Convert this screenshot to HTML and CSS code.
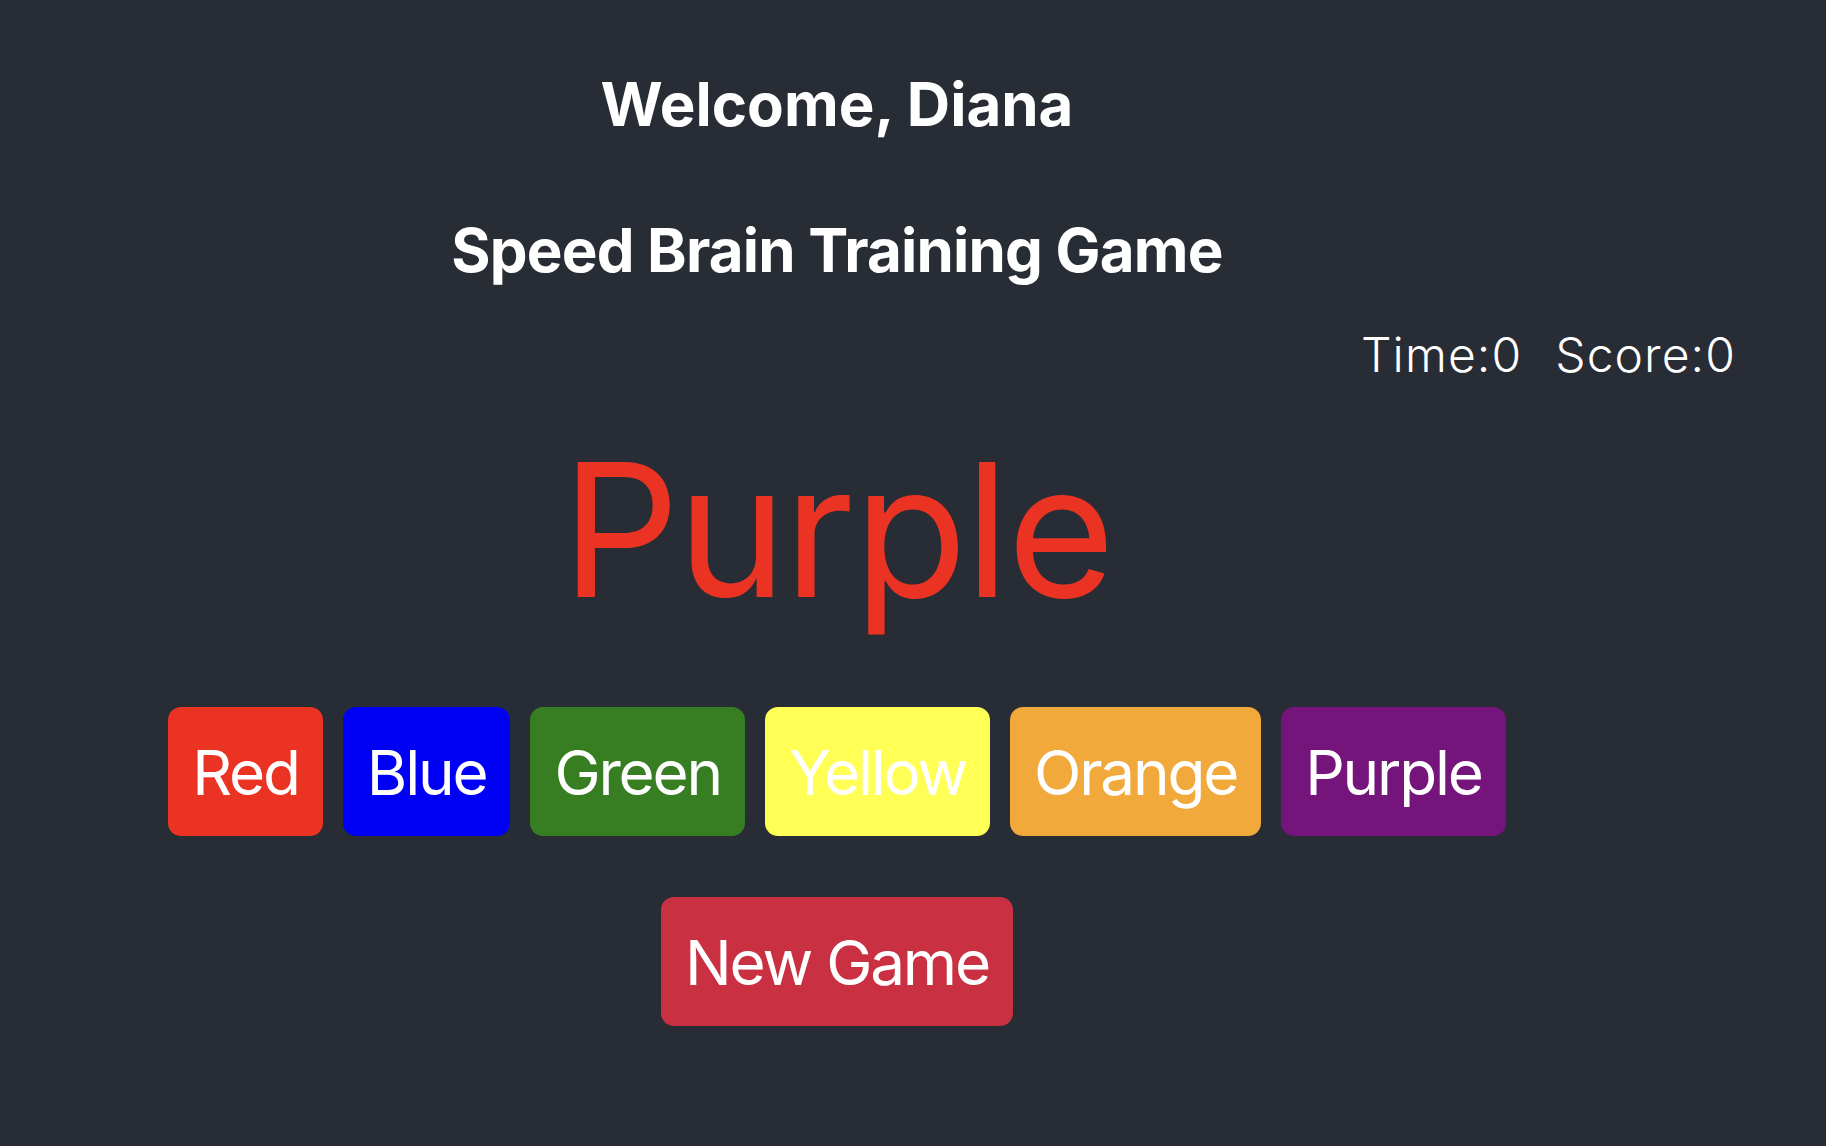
FILE: index.html
```html
<!DOCTYPE html>
<html lang="en">
<head>
<meta charset="utf-8">
<title>Speed Brain Training Game</title>
<link rel="stylesheet" href="styles.css">
</head>
<body>
<div class="app">
  <div class="main">
    <h1 class="title welcome">Welcome, Diana</h1>
    <h1 class="title game">Speed Brain Training Game</h1>
  </div>
  <div class="stats">
    <span class="stat">Time:0</span>
    <span class="stat">Score:0</span>
  </div>
  <div class="main">
    <div class="word">Purple</div>
    <div class="choices">
      <button class="btn red">Red</button>
      <button class="btn blue">Blue</button>
      <button class="btn green">Green</button>
      <button class="btn yellow">Yellow</button>
      <button class="btn orange">Orange</button>
      <button class="btn purple">Purple</button>
    </div>
    <button class="btn newgame">New Game</button>
  </div>
</div>
</body>
</html>
```
FILE: styles.css
```css
html, body {
  margin: 0;
  padding: 0;
  background: #282c34;
  height: 100%;
}
body {
  font-family: Inter, "Noto Sans", "Liberation Sans", sans-serif;
  color: #ffffff;
}
.app {
  display: flex;
  flex-direction: column;
  padding-top: 64px;
}
.main {
  width: 1674px;
  display: flex;
  flex-direction: column;
  align-items: center;
}
.title {
  margin: 0;
  font-size: 60px;
  line-height: 80px;
  font-weight: 700;
}
.game {
  margin-top: 66px;
  letter-spacing: -0.8px;
}
.stats {
  display: flex;
  justify-content: flex-end;
  gap: 33px;
  padding-right: 90px;
  margin-top: 35px;
  font-size: 48px;
  line-height: 60px;
  font-weight: 300;
  letter-spacing: 1.1px;
}
.word {
  margin-top: 45px;
  font-size: 185px;
  line-height: 200px;
  color: #ea3323;
  font-weight: 400;
  letter-spacing: -2.5px;
}
.choices {
  display: flex;
  gap: 20px;
  margin-top: 77px;
}
.btn {
  font-family: inherit;
  font-size: 62px;
  line-height: 81px;
  font-weight: 400;
  letter-spacing: -2.2px;
  color: #ffffff;
  border: none;
  border-radius: 13px;
  padding: 25px 24px 23px;
  cursor: pointer;
}
.red { background: #ea3323; }
.blue { background: #0000f5; }
.green { background: #377e22; }
.yellow { background: #ffff55; }
.orange { background: #f1a93c; }
.purple { background: #75157b; }
.newgame {
  margin-top: 61px;
  background: #c93143;
}
```
